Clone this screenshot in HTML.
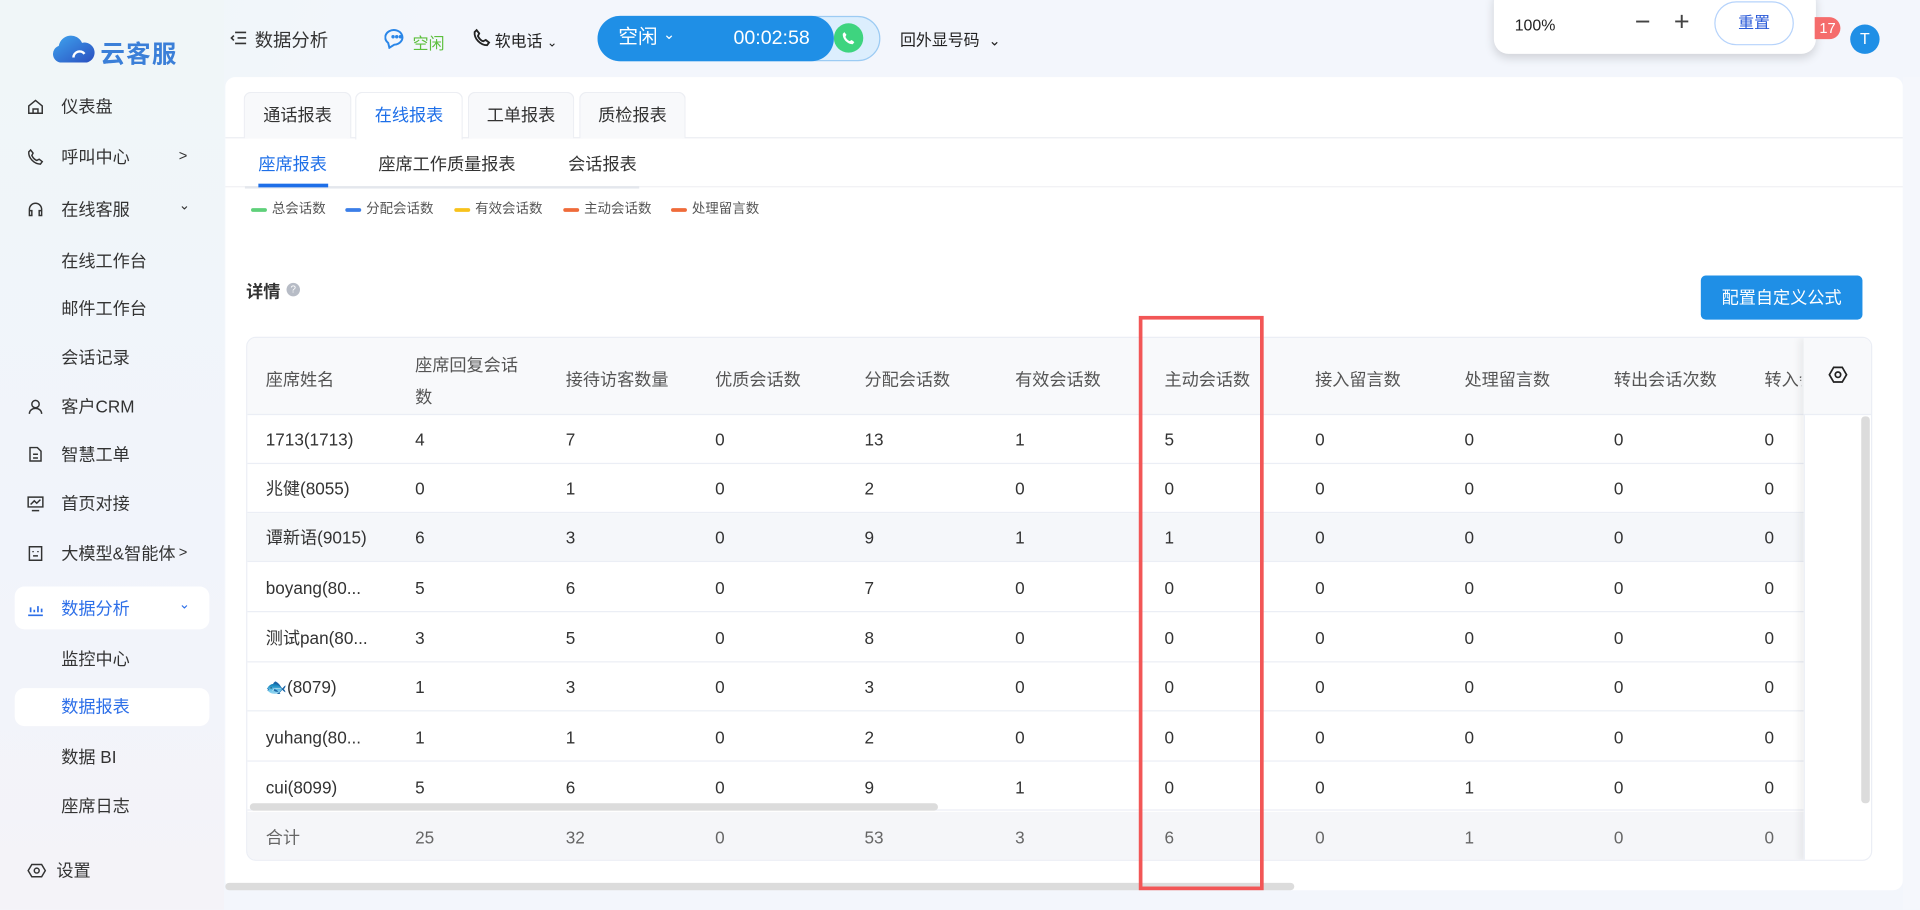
<!DOCTYPE html>
<html><head><meta charset="utf-8">
<style>
*{box-sizing:border-box;margin:0;padding:0}
html,body{width:1920px;height:910px;overflow:hidden;background:#f3f6fc}
body{font-family:"Liberation Sans","Noto Sans CJK SC",sans-serif;color:#333}
#root{position:absolute;left:0;top:0;width:1568px;height:743px;transform:scale(1.22449);transform-origin:0 0;background:linear-gradient(110deg,#eef6f7 0%,#f3f6fc 20%,#f3f6fc 100%)}
.abs{position:absolute;white-space:nowrap}
.side{position:absolute;left:0;top:0;width:183px;height:743px;background:linear-gradient(180deg,#f0f6f8 0%,#f1f4fb 60%,#f4f3f8 100%)}
.nav{position:absolute;left:22px;font-size:14px;color:#333;height:20px;line-height:20px;width:150px;white-space:nowrap}
.nav svg{position:absolute;left:0;top:3px}
.nav span{position:absolute;left:28px;white-space:nowrap}
.sub{position:absolute;left:50px;font-size:14px;color:#333;line-height:20px;white-space:nowrap}
.arr{position:absolute;left:146px;font-size:12px;color:#333}
.card{position:absolute;left:184px;top:63px;width:1370px;height:664px;background:#fff;border-radius:8px}
.tab{position:absolute;top:75px;height:38px;border:1px solid #eceef3;border-bottom:none;border-radius:6px 6px 0 0;background:#f8f9fb;font-size:14px;color:#333;text-align:center;line-height:36px}
.tbl{position:absolute;left:201px;top:275px;width:1328px;height:428px;border:1px solid #ebeef5;border-radius:8px;overflow:hidden;background:#fff}
.c{position:absolute;font-size:14px;color:#333;white-space:nowrap}
.h{color:#555}
.row{position:absolute;left:0;width:1328px;height:40px;border-bottom:1px solid #ebeef5}
.leg{position:absolute;top:165px;font-size:11px;color:#555;line-height:12px;white-space:nowrap}
.leg i{position:absolute;top:5px;left:-17px;width:13px;height:3px;border-radius:2px}
</style></head><body>
<div id="root">
<div class="side"></div>
<svg class="abs" style="left:42px;top:29px" width="36" height="22" viewBox="0 0 36 22"><defs><linearGradient id="g" x1="0" y1="0" x2="1" y2="1"><stop offset="0" stop-color="#3fa5ef"/><stop offset="1" stop-color="#2a4fc0"/></linearGradient></defs><path d="M7 22 A7 7 0 0 1 6 8.5 A10 10 0 0 1 25 6 A8 8 0 0 1 29 22 Z" fill="url(#g)"/><path d="M18 18 A5 5 0 0 1 27 15" stroke="#fff" stroke-width="2" fill="none"/></svg>
<div class="abs" style="left:82px;top:28px;font-size:20px;font-weight:bold;color:#3b7fd8;letter-spacing:1px">云客服</div>

<div class="nav" style="top:77px"><svg width="14" height="14" viewBox="0 0 14 14" fill="none" stroke="#333" stroke-width="1.2"><path d="M1.5 6.5 7 2l5.5 4.5V12.5h-11z M5 12.5V9h4v3.5"/></svg><span>仪表盘</span></div>
<div class="nav" style="top:118px"><svg width="14" height="14" viewBox="0 0 14 14" fill="none" stroke="#333" stroke-width="1.2"><path d="M3 1.5 5 4 4 6c1 2 2.5 3.5 4 4l2-1 2.5 2-1.5 2C6 13 1 8 1.5 3z"/></svg><span>呼叫中心</span></div>
<div class="arr" style="top:120px">&gt;</div>
<div class="nav" style="top:161px"><svg width="14" height="14" viewBox="0 0 14 14" fill="none" stroke="#333" stroke-width="1.2"><path d="M2 11V7a5 5 0 0 1 10 0v4 M2 8h2v4H2z M10 8h2v4h-2z"/></svg><span>在线客服</span></div>
<div class="arr" style="top:161px;font-size:11px">⌄</div>
<div class="sub" style="top:203px">在线工作台</div>
<div class="sub" style="top:242px">邮件工作台</div>
<div class="sub" style="top:282px">会话记录</div>
<div class="nav" style="top:322px"><svg width="14" height="14" viewBox="0 0 14 14" fill="none" stroke="#333" stroke-width="1.2"><circle cx="7" cy="5" r="3"/><path d="M2 13c0-3 2.5-4.5 5-4.5s5 1.5 5 4.5"/></svg><span>客户CRM</span></div>
<div class="nav" style="top:361px"><svg width="14" height="14" viewBox="0 0 14 14" fill="none" stroke="#333" stroke-width="1.2"><path d="M2.5 1.5h6l3 3v8h-9z M5 7h4 M5 10h4"/></svg><span>智慧工单</span></div>
<div class="nav" style="top:401px"><svg width="14" height="14" viewBox="0 0 14 14" fill="none" stroke="#333" stroke-width="1.2"><path d="M1 2h12v8H1z M4 13h6 M3 8l3-3 2 2 3-3"/></svg><span>首页对接</span></div>
<div class="nav" style="top:442px"><svg width="14" height="14" viewBox="0 0 14 14" fill="none" stroke="#333" stroke-width="1.2"><path d="M2 1.5h10v11H2z M5 5v1 M9 5v1 M5 9h4"/></svg><span>大模型&amp;智能体</span></div>
<div class="arr" style="top:444px">&gt;</div>
<div class="abs" style="left:12px;top:479px;width:159px;height:35px;background:#fff;border-radius:8px"></div>
<div class="nav" style="top:487px;color:#2d6fe8"><svg width="14" height="14" viewBox="0 0 14 14" fill="none" stroke="#2d6fe8" stroke-width="1.4"><path d="M1 12.5h12 M3 10V6 M6 10V8 M9 10V5 M12 10V7"/></svg><span>数据分析</span></div>
<div class="arr" style="top:487px;font-size:11px;color:#2d6fe8">⌄</div>
<div class="sub" style="top:528px">监控中心</div>
<div class="abs" style="left:12px;top:562px;width:159px;height:31px;background:#fff;border-radius:8px"></div>
<div class="sub" style="top:567px;color:#2d6fe8">数据报表</div>
<div class="sub" style="top:608px">数据 BI</div>
<div class="sub" style="top:648px">座席日志</div>
<div class="nav" style="top:701px;left:22px"><svg width="16" height="14" viewBox="0 0 16 14" fill="none" stroke="#333" stroke-width="1.2"><path d="M1 7 4 2h8l3 5-3 5H4z"/><circle cx="8" cy="7" r="2"/></svg><span style="left:24px">设置</span></div>

<svg class="abs" style="left:188px;top:25px" width="14" height="12" viewBox="0 0 14 12" fill="none" stroke="#333" stroke-width="1.3"><path d="M4 1.5h9 M6 6h7 M4 10.5h9 M3 4 1 6l2 2"/></svg>
<div class="abs" style="left:208px;top:22px;font-size:15px;color:#333">数据分析</div>
<svg class="abs" style="left:314px;top:22px" width="20" height="18" viewBox="0 0 20 18" fill="none" stroke="#2a86e8" stroke-width="1.6"><path d="M3 13 A7 6 0 1 1 8 14.5 L4 17z"/><circle cx="7" cy="8" r=".6" fill="#2a86e8"/><circle cx="10" cy="8" r=".6" fill="#2a86e8"/><circle cx="13" cy="8" r=".6" fill="#2a86e8"/></svg>
<div class="abs" style="left:337px;top:25px;font-size:13px;color:#5cbf3c">空闲</div>
<svg class="abs" style="left:386px;top:23px" width="15" height="15" viewBox="0 0 14 14" fill="none" stroke="#222" stroke-width="1.4"><path d="M3 1.5 5 4 4 6c1 2 2.5 3.5 4 4l2-1 2.5 2-1.5 2C6 13 1 8 1.5 3z"/></svg>
<div class="abs" style="left:404px;top:23px;font-size:13px;color:#222">软电话 <span style="font-size:10px">⌄</span></div>
<div class="abs" style="left:488px;top:13px;width:231px;height:37px;border-radius:19px;background:#dceefd;border:1px solid #9ccbf3"></div>
<div class="abs" style="left:488px;top:13px;width:193px;height:37px;border-radius:19px;background:#1f8fe6"></div>
<div class="abs" style="left:505px;top:20px;font-size:16px;line-height:22px;color:#fff">空闲 <span style="font-size:12px;position:relative;top:-3px">⌄</span></div>
<div class="abs" style="left:599px;top:21px;font-size:16px;line-height:22px;color:#fff">00:02:58</div>
<div class="abs" style="left:681px;top:19px;width:24px;height:24px;border-radius:50%;background:#3ed47f"></div>
<svg class="abs" style="left:687px;top:25px" width="12" height="12" viewBox="0 0 14 14" fill="#fff"><path d="M3 1.5 5 4 4 6c1 2 2.5 3.5 4 4l2-1 2.5 2-1.5 2C6 13 1 8 1.5 3z"/></svg>
<div class="abs" style="left:735px;top:22px;font-size:13px;color:#222">回外显号码 &nbsp;<span style="font-size:12px">⌄</span></div>

<div class="abs" style="left:1220px;top:-10px;width:263px;height:54px;background:#fff;border-radius:12px;box-shadow:0 3px 8px rgba(0,0,0,.15)"></div>
<div class="abs" style="left:1237px;top:13px;font-size:13px;color:#222">100%</div>
<div class="abs" style="left:1335px;top:5px;font-size:22px;color:#444">−</div>
<div class="abs" style="left:1367px;top:5px;font-size:22px;color:#444">+</div>
<div class="abs" style="left:1400px;top:1px;width:65px;height:36px;border:1px solid #b6d3fb;border-radius:18px;text-align:center;line-height:34px;font-size:13px;color:#2a5ad8">重置</div>
<div class="abs" style="left:1482px;top:14px;width:21px;height:18px;border-radius:0 9px 9px 0;background:#f56c6c;color:#fff;font-size:12px;text-align:center;line-height:18px">17</div>
<div class="abs" style="left:1511px;top:20px;width:24px;height:24px;border-radius:50%;background:#1f8fe6;color:#fff;font-size:13px;text-align:center;line-height:24px">T</div>

<div class="card"></div>
<div class="abs" style="left:1554px;top:63px;width:14px;height:680px;background:#f5f7fc"></div>
<div class="abs" style="left:184px;top:112px;width:1370px;height:1px;background:#eceef3"></div>
<div class="tab" style="left:199px;width:88px">通话报表</div>
<div class="tab" style="left:290px;width:88px;background:#fff;color:#1e6fe8;height:39px">在线报表</div>
<div class="tab" style="left:382px;width:87px">工单报表</div>
<div class="tab" style="left:473px;width:87px">质检报表</div>
<div class="abs" style="left:184px;top:152px;width:1370px;height:1px;background:#f0f1f4"></div>
<div class="abs" style="left:200px;top:152px;width:322px;height:2px;background:#e4e7ed"></div>
<div class="abs" style="left:211px;top:124px;font-size:14px;color:#1e6fe8">座席报表</div>
<div class="abs" style="left:211px;top:150px;width:57px;height:3px;background:#1e6fe8"></div>
<div class="abs" style="left:309px;top:124px;font-size:14px;color:#333">座席工作质量报表</div>
<div class="abs" style="left:464px;top:124px;font-size:14px;color:#333">会话报表</div>

<div class="leg" style="left:222px"><i style="background:#5fd07a"></i>总会话数</div>
<div class="leg" style="left:299px"><i style="background:#3b7ee8"></i>分配会话数</div>
<div class="leg" style="left:388px"><i style="background:#f8c21c"></i>有效会话数</div>
<div class="leg" style="left:477px"><i style="background:#ef6b3a"></i>主动会话数</div>
<div class="leg" style="left:565px"><i style="background:#ef6b3a"></i>处理留言数</div>

<div class="abs" style="left:201px;top:228px;font-size:14px;font-weight:bold;color:#333">详情</div>
<div class="abs" style="left:234px;top:231px;width:11px;height:11px;border-radius:50%;background:#b7bcc6;color:#fff;font-size:8px;text-align:center;line-height:11px">?</div>
<div class="abs" style="left:1389px;top:225px;width:132px;height:36px;background:#1f8fe6;border-radius:4px;color:#fff;font-size:14px;text-align:center;line-height:36px">配置自定义公式</div>

<div class="tbl">
 <div class="abs" style="left:0;top:0;width:1328px;height:63px;background:#f8f9fb;border-bottom:1px solid #ebeef5"></div>
 <div class="row" style="top:63px"></div>
 <div class="row" style="top:103px"></div>
 <div class="row" style="top:143px;background:#f5f7fa"></div>
 <div class="row" style="top:184px"></div>
 <div class="row" style="top:225px"></div>
 <div class="row" style="top:265px"></div>
 <div class="row" style="top:306px"></div>
 <div class="row" style="top:346px"></div>
 <div class="abs" style="left:0;top:387px;width:1328px;height:41px;background:#f5f6f9"></div>
 <div class="abs" style="left:2px;top:380px;width:562px;height:6px;border-radius:3px;background:#dcdcdc"></div>
 <div class="abs" style="left:1271px;top:0;width:57px;height:428px;background:#fff;box-shadow:-4px 0 6px rgba(0,0,0,.06);border-left:1px solid #ebeef5"></div>
 <div class="abs" style="left:1271px;top:0;width:57px;height:63px;background:#f8f9fb;border-bottom:1px solid #ebeef5"></div>
 <svg class="abs" style="left:1291px;top:22px" width="16" height="16" viewBox="0 0 16 16" fill="none" stroke="#222" stroke-width="1.4"><path d="M4.5 2h7L15 8l-3.5 6h-7L1 8z"/><circle cx="8" cy="8" r="2.2"/></svg>
 <div class="abs" style="left:1318px;top:64px;width:7px;height:316px;border-radius:3px;background:#dcdcdc"></div>
</div>
<div id="cells"></div>
<div class="abs" style="left:184px;top:721px;width:873px;height:6px;border-radius:3px;background:#dcdcdc"></div>
<div class="abs" style="left:930px;top:258px;width:102px;height:469px;border:3px solid #f25656"></div>
</div>
<script>
var xs=[217,339,462,584,706,829,951,1074,1196,1318,1441];
var hdr=["座席姓名","座席回复会话<br>数","接待访客数量","优质会话数","分配会话数","有效会话数","主动会话数","接入留言数","处理留言数","转出会话次数","转入会"];
var rows=[["1713(1713)",4,7,0,13,1,5,0,0,0,0],["兆健(8055)",0,1,0,2,0,0,0,0,0,0],["谭新语(9015)",6,3,0,9,1,1,0,0,0,0],["boyang(80...",5,6,0,7,0,0,0,0,0,0],["测试pan(80...",3,5,0,8,0,0,0,0,0,0],["🐟(8079)",1,3,0,3,0,0,0,0,0,0],["yuhang(80...",1,1,0,2,0,0,0,0,0,0],["cui(8099)",5,6,0,9,1,0,0,1,0,0],["合计",25,32,0,53,3,6,0,1,0,0]];
var ys=[349,389,429,470,511,551,592,633,674];
var h="";
for(var i=0;i<11;i++){var t=i==1?285:297;h+='<div class="c h" style="left:'+xs[i]+'px;top:'+t+'px;line-height:26px;'+(i==10?'width:30px;overflow:hidden':'')+'">'+hdr[i]+'</div>';}
for(var r=0;r<rows.length;r++)for(var i=0;i<11;i++){h+='<div class="c" style="left:'+xs[i]+'px;top:'+ys[r]+'px;line-height:20px;'+(r==8?'color:#666':'')+'">'+rows[r][i]+'</div>';}
document.getElementById('cells').innerHTML=h;
</script>
</body></html>
